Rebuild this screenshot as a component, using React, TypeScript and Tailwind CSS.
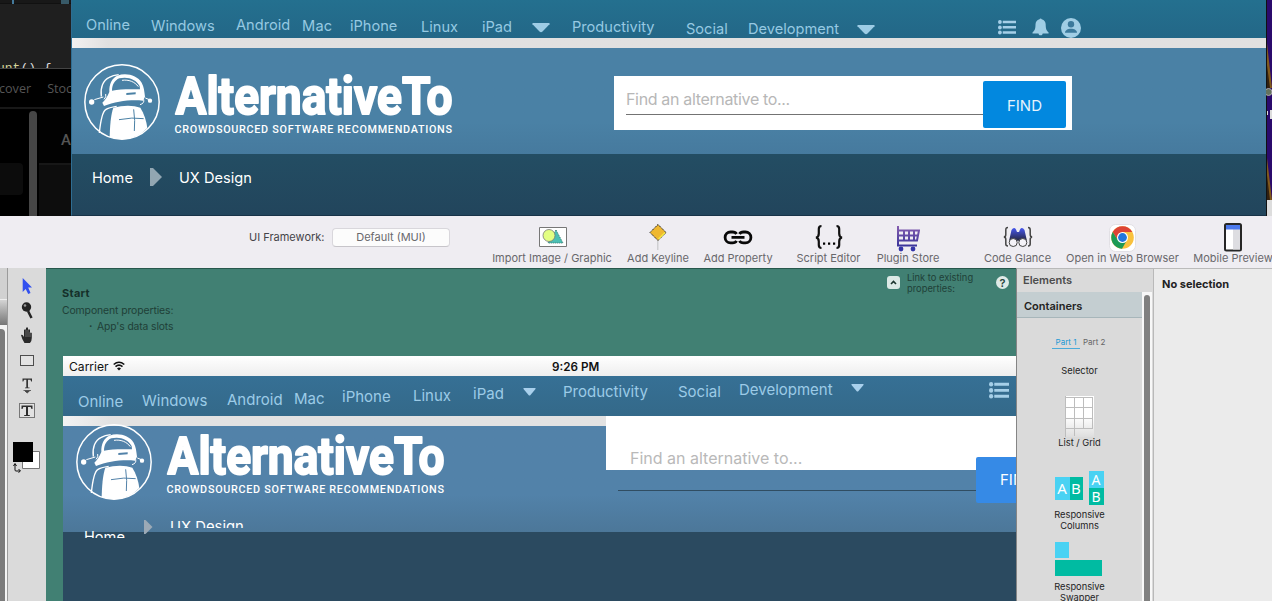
import React from "react";

type NavItem = { label?: string; icon?: "caret" | "list" | "bell" | "user"; cls: string };

const topNav: NavItem[] = [
  { label: "Online", cls: "w-[65px] pt-[15px]" },
  { label: "Windows", cls: "w-[85px] pt-[16px]" },
  { label: "Android", cls: "w-[66px] pt-[15px]" },
  { label: "Mac", cls: "w-[48px] pt-[16px] tracking-[0.2px]" },
  { label: "iPhone", cls: "w-[71px] pt-[16px]" },
  { label: "Linux", cls: "w-[61px] pt-[17px]" },
  { label: "iPad", cls: "w-[50px] pt-[17px]" },
  { icon: "caret", cls: "w-[40px] pt-[23px]" },
  { label: "Productivity", cls: "w-[114px] pt-[17px]" },
  { label: "Social", cls: "w-[62px] pt-[19px]" },
  { label: "Development", cls: "w-[109px] pt-[19px]" },
  { icon: "caret", cls: "w-[141px] pt-[25px]" },
  { icon: "list", cls: "w-[34px] pt-[20px]" },
  { icon: "bell", cls: "w-[29px] pt-[18px]" },
  { icon: "user", cls: "w-[20px] pt-[18px]" },
];

const mockNav: NavItem[] = [
  { label: "Online", cls: "w-[64px] pt-[16px]" },
  { label: "Windows", cls: "w-[85px] pt-[15px]" },
  { label: "Android", cls: "w-[67px] pt-[14px]" },
  { label: "Mac", cls: "w-[48px] pt-[13px]" },
  { label: "iPhone", cls: "w-[71px] pt-[11px]" },
  { label: "Linux", cls: "w-[60px] pt-[10px]" },
  { label: "iPad", cls: "w-[50px] pt-[8px]" },
  { icon: "caret", cls: "w-[40px] pt-[12px]" },
  { label: "Productivity", cls: "w-[115px] pt-[6px]" },
  { label: "Social", cls: "w-[61px] pt-[6px]" },
  { label: "Development", cls: "w-[112px] pt-[4px]" },
  { icon: "caret", cls: "w-[138px] pt-[8px]" },
  { icon: "list", cls: "w-[24px] pt-[6px]" },
];

function NavIcon({ name, small }: { name: string; small?: boolean }) {
  if (name === "caret")
    return small ? (
      <svg width="13" height="8" viewBox="0 0 13 8" className="block fill-[#a9d0ec]"><path d="M.5 0h12v1L7.5 7Q6.500 8 5.500 7L.5 1z" /></svg>
    ) : (
      <svg width="18" height="10" viewBox="0 0 18 10" className="block fill-[#9dcce5]"><path d="M.5 0h17v1.200L10.500 8.500Q9 9.800 7.500 8.500L.5 1.200z" /></svg>
    );
  if (name === "list")
    return (
      <svg width={small ? 20 : 18} height={small ? 17 : 15} viewBox="0 0 19 15" preserveAspectRatio="none" className="block fill-[#a5cfe8]">
        <circle cx="2" cy="2" r="2" /><circle cx="2" cy="7.400" r="2" /><circle cx="2" cy="12.600" r="2" />
        <path d="M5 .7h14v2.500H5zM5 6.100h14v2.500H5zM5 11.300h14v2.500H5z" />
      </svg>
    );
  if (name === "bell")
    return (
      <svg width="17" height="18" viewBox="0 0 17 18" className="block fill-[#a0cee5]">
        <path d="M7.500 1.300a1.200 1.200 0 0 1 2.200 0c2.700.6 4 2.700 4 5.200 0 4.500.8 6 2.900 8v.9H.5v-.9c2.200-2 3-3.500 3-8 0-2.500 1.300-4.600 4-5.200zM6.500 15.400h4.200c-.2 1.200-.9 1.900-2.100 1.900s-1.900-.7-2.100-1.900z" />
      </svg>
    );
  return (
    <svg width="20" height="20" viewBox="0 0 20 20" className="block">
      <circle cx="10" cy="10" r="10" fill="#a0cee5" />
      <circle cx="10" cy="6.200" r="3.200" fill="#3b7a9c" />
      <path d="M4 14.800c0-2.500 2.800-4 6-4s6 1.500 6 4z" fill="#3b7a9c" />
    </svg>
  );
}

function Nav({ items, small }: { items: NavItem[]; small?: boolean }) {
  return (
    <>
      {items.map((it, i) => (
        <div key={i} className={"shrink-0 whitespace-nowrap leading-5 " + it.cls}>
          {it.icon ? <NavIcon name={it.icon} small={small} /> : it.label}
        </div>
      ))}
    </>
  );
}

function Logo({ sky }: { sky: string }) {
  return (
    <svg width="370" height="76" viewBox="0 0 370 76" className="block overflow-visible">
      <g transform="scale(.33333)">
        <circle cx="114" cy="114" r="111.500" fill="none" stroke="#fff" strokeWidth="4.500" />
        <path d="M52 98C48 72 57 48 76 40C84 35 92 33 104 32" fill="none" stroke="#fff" strokeWidth="4" />
        <path d="M76 84C75 60 84 42 100 35C128 25 160 35 173 56C180 68 181 82 183 98L177 110C140 106 95 112 60 126L55 116C64 108 70 98 76 84z" fill="#fff" />
        <path d="M84 80C84 62 92 49 106 43C132 37 156 46 167 66L168 76C138 75 108 75 84 80z" fill={sky} />
        <path d="M114 49C134 46 152 53 163 68" fill="none" stroke="#fff" strokeWidth="3" />
        <path d="M127 87l28-2v6l-28 2z" fill={sky} />
        <path d="M60 106q8-7 5-16M31 107l27-8M184 102l12 5M168 122q14-4 11-16" fill="none" stroke="#fff" strokeWidth="3" />
        <path d="M46 207C49 178 53 145 65 137C72 132 84 129 98 127" fill="none" stroke="#fff" strokeWidth="4" />
        <path d="M77 220C78 185 80 155 88 131C118 123 148 123 169 131C180 148 187 170 190 192Q145 240 77 220z" fill="#fff" />
        <path d="M149 136Q154 170 151 201M105 167Q145 159 179 164" fill="none" stroke={sky} strokeWidth="3" />
        <circle cx="23" cy="114" r="8" fill="#fff" /><circle cx="198" cy="110" r="6.500" fill="#fff" />
      </g>
      <text x="91.500" y="50.300" textLength="277" lengthAdjust="spacingAndGlyphs" fill="#fff" stroke="#fff" strokeWidth="2" strokeLinejoin="round" className="font-['Roboto',sans-serif] text-[52.5px] font-bold">AlternativeTo</text>
      <text x="90.500" y="68.700" textLength="277.500" lengthAdjust="spacing" fill="#fff" className="font-['Roboto',sans-serif] text-[10.8px] font-medium">CROWDSOURCED SOFTWARE RECOMMENDATIONS</text>
    </svg>
  );
}

function TopBackground() {
  return (
    <div className="h-[216px] w-[71px] shrink-0 overflow-hidden bg-black text-[#555]">
      <div className="flex h-[69px] flex-col justify-between overflow-hidden border-b border-[#444] bg-[#1f1f1f]">
        <div className="flex h-1 justify-between border-b border-[#111] bg-[#181818] pl-3 pr-0.5"><i className="h-1 w-0.5 bg-[#44799b]" /><i className="h-1 w-2 bg-[#385a68]" /></div>
        <div className="-ml-[3px] h-[6px] overflow-hidden whitespace-pre font-['Liberation_Mono',monospace] text-[13px] leading-[14px] text-[#ddd]"><span className="text-[#d4d49a]">unt</span>() {"{"}</div>
      </div>
      <div className="flex h-10 gap-[16px] border-b-2 border-[#181818] pt-[10px] font-['Open_Sans',sans-serif] text-[12.6px] leading-5"><span className="-ml-px">cover</span><span>Stock</span></div>
      <div className="flex h-[107px]">
        <div className="w-[29px] pt-[54px]"><div className="h-8 w-[23px] rounded-r bg-[#0c0c0c]" /></div>
        <div className="mt-0.5 w-2 rounded-t-full bg-[#464646]" />
        <div className="ml-0.5 w-8 bg-[#0d0d0d]">
          <div className="h-[56px] border-b-2 border-[#171717] bg-[#020202] pl-[22px] pt-[21px] font-['Roboto',sans-serif] text-[15px] font-medium leading-5 text-[#555]">A</div>
        </div>
      </div>
    </div>
  );
}

function Site() {
  return (
    <div className="flex h-[216px] w-[1195px] shrink-0 flex-col border-b border-[#183348] border-l border-l-[#2f6d92]">
      <div className="flex h-[38px] shrink-0 bg-linear-to-b from-[#24708f] to-[#236787] pl-[14px] text-[14.6px] text-[#96c9e2]"><Nav items={topNav} /></div>
      <div className="h-[10px] shrink-0 bg-linear-to-r from-[#f1f1f1] via-[#e0e0e0] via-[3%] to-[#e0e0e0]" />
      <div className="flex h-[106px] shrink-0 bg-linear-to-b from-[#4a81a5] from-70% to-[#467a9e] pl-[12px] pt-[16px]">
        <div className="w-[530px]"><Logo sky="#4a81a5" /></div>
        <div className="mt-3 flex h-[54px] w-[458px] bg-white pl-3 pt-[5px]">
          <div className="h-[34px] w-[357px] border-b border-[#737373] pt-2 text-[16px] leading-5 tracking-[-0.34px] text-[#b7b7b7]">Find an alternative to...</div>
          <div className="flex h-[47px] w-[83px] items-center justify-center rounded-[2px] bg-[#0288df] pt-[3px] text-[15px] text-[#e6f3fc]">FIND</div>
        </div>
      </div>
      <div className="flex grow bg-linear-to-b from-[#234d63] to-[#22455c] pl-5 pt-[14px] text-[14.6px] leading-5 text-white">
        <span className="w-[58px]">Home</span>
        <svg width="12" height="20" viewBox="0 0 12 20" className="-mt-px mr-[17px]"><path d="M0 1h3l9 9-9 9H0z" fill="#92a6b2" /></svg>
        <span>UX Design</span>
      </div>
    </div>
  );
}

function RightEdge() {
  return (
    <div className="flex grow flex-col bg-[#2b0a6c]">
      <svg width="6" height="216" viewBox="0 0 6 216" className="block">
        <path d="M0 0h1v216H0z" fill="#111" />
        <path d="M1 43l5 45H1zM1 158l5 42H1z" fill="#80591c" />
        <path d="M1 65l3 23H1zM1 175l3 25H1z" fill="#322010" />
        <circle cx="2.500" cy="92" r="3.500" fill="#64735f" stroke="#aaa" />
        <path d="M1 111h1v4H1zM4 110h2v9H4z" fill="#ddd" />
        <path d="M1 200h5v16H1z" fill="#ddd" />
      </svg>
    </div>
  );
}

const tools: { label: string; cls: string; icon: React.ReactNode }[] = [
  { label: "Import Image / Graphic", cls: "w-[120px]", icon: (
    <svg width="28" height="30" viewBox="0 0 28 30" className="ml-0.5"><path d="M.5 5.500h27v19H.5z" fill="#fff" stroke="#777" /><path d="M17 8l7 13H9z" fill="#4cbfb3" stroke="#3b7770" strokeDasharray="1 1" /><circle cx="10" cy="13.500" r="6" fill="#e3ff83" stroke="#777" strokeWidth=".8" /></svg>) },
  { label: "Add Keyline", cls: "w-[62px] ml-[15px]", icon: (
    <svg width="18" height="30" viewBox="0 0 18 30"><path d="M8 19h1.500v9H8z" fill="#cfcfd2" /><path d="M9 2.500l8 8-8 8-8-8z" fill="#efb830" stroke="#222" strokeDasharray="1.500 .7" /><path d="M9.500 17l6.500-6.500" stroke="#f6e83f" strokeWidth="1.500" /></svg>) },
  { label: "Add Property", cls: "w-[70px] ml-[14px]", icon: (
    <svg width="30" height="30" viewBox="0 0 30 30" fill="none" stroke="#080808" strokeWidth="2.800"><path d="M13.500 12q-1-2-4-2H7.500a5.200 5.200 0 0 0 0 10.800H9.500q3 0 4-2M16.500 12q1-2 4-2h2a5.200 5.200 0 0 1 0 10.800h-2q-3 0-4-2M8.500 15.400h13" /></svg>) },
  { label: "Script Editor", cls: "w-[65px] ml-[23px]", icon: (
    <svg width="28" height="30" viewBox="0 0 28 30"><path d="M6.500 4Q3.800 4 3.800 7v4.500Q3.800 15 1 15.500Q3.800 16 3.800 19.500v3.500Q3.800 26 6.500 26M21.500 4Q24.200 4 24.200 7v4.500Q24.200 15 27 15.500Q24.200 16 24.200 19.500v3.500Q24.200 26 21.500 26" fill="none" stroke="#111" strokeWidth="2.200" /><path d="M8 20.500h2.200v2.200H8zM13 20.500h2.200v2.200H13zM18 20.500h2.200v2.200H18z" /></svg>) },
  { label: "Plugin Store", cls: "w-[64px] ml-[15px]", icon: (
    <svg width="24" height="30" viewBox="0 0 24 30"><defs><linearGradient id="cart" gradientUnits="userSpaceOnUse" x1="0" y1="3" x2="0" y2="25"><stop stopColor="#8a60b0" /><stop offset="1" stopColor="#37339a" /></linearGradient></defs><g fill="none" stroke="url(#cart)" strokeWidth="2"><path d="M2 4v19.500h19M2 8.500h21L21 18.500H2M2 13.500h20M8 8.500v10M13 8.500v10M18 8.500v10" /></g><circle cx="5" cy="27" r="2.400" fill="#3434a8" /><circle cx="17" cy="27" r="2.400" fill="#3434a8" /></svg>) },
  { label: "Code Glance", cls: "w-[67px] ml-[44px]", icon: (
    <svg width="30" height="30" viewBox="0 0 30 30"><defs><linearGradient id="bino" x1="0" y1="0" x2="0" y2="1"><stop stopColor="#4656ee" /><stop offset="1" stopColor="#25253a" /></linearGradient></defs><path d="M6 19L8.500 8Q11 4.500 13 7.500L14 10h2l1-2.500Q19 4.500 21.500 8L24 19l-5-2-4 2-4-2z" fill="url(#bino)" /><circle cx="10.200" cy="20.500" r="4" fill="#f5f3f8" stroke="#444" /><circle cx="19.800" cy="20.500" r="4" fill="#f5f3f8" stroke="#444" /><path d="M5 5.500Q2.800 5.500 2.800 8v4.500q0 2.500-2 2.500 2 0 2 2.500V22q0 2 2.200 2M25 5.500q2.200 0 2.200 2.500v4.500q0 2.500 2 2.500-2 0-2 2.500V22q0 2-2.200 2" fill="none" stroke="#444" strokeWidth="1.500" /></svg>) },
  { label: "Open in Web Browser", cls: "w-[113px] ml-[15px]", icon: (
    <svg width="27" height="32" viewBox="0 0 27 32"><rect x=".5" y="2.500" width="26" height="27" rx="6" fill="#fff" stroke="#e2e0e5" /><circle cx="13.500" cy="15.500" r="11.300" fill="#f9c13d" /><path d="M3.700 10a11.300 11.300 0 0 1 19.600 0H13.500v5.500L8.800 18z" fill="#dd4335" /><path d="M3.700 10a11.300 11.300 0 0 0 9.300 16.800l5-8.800-9.200 0z" fill="#1c9a55" /><circle cx="13.500" cy="15.500" r="5.500" fill="#fff" /><circle cx="13.500" cy="15.500" r="4.400" fill="#2276dd" /></svg>) },
  { label: "Mobile Preview", cls: "w-[80px] ml-[14px]", icon: (
    <svg width="18" height="34" viewBox="0 0 18 34"><rect x="1" y="2" width="16" height="26.500" rx="1.500" fill="#fff" stroke="#262626" strokeWidth="2" /><path d="M9 7h7v20.500H9z" fill="#dddde1" /><path d="M2 3h14v4.500H2z" fill="#4c79ed" /></svg>) },
];

function Toolbar() {
  return (
    <div className="flex h-[52px] shrink-0 overflow-hidden bg-[#efedf2] text-[11px] text-[#69686c]">
      <div className="flex h-[42px] w-[492px] shrink-0 items-center pl-[249px] leading-[14px]">
        <span className="w-[83px] shrink-0 whitespace-nowrap text-[#454449]">UI Framework:</span>
        <span className="flex h-[19px] w-[118px] items-center justify-center rounded border border-[#d9d7dc] border-b-[#c7c5ca] bg-[#fcfcfc]">Default (MUI)</span>
      </div>
      {tools.map((t) => (
        <div key={t.label} className={"flex shrink-0 flex-col items-center whitespace-nowrap pt-[6px] leading-[14px] " + t.cls}>
          <div className="flex h-[29px] items-start justify-center">{t.icon}</div>
          <span>{t.label}</span>
        </div>
      ))}
    </div>
  );
}

function Palette() {
  return (
    <>
      <div className="flex w-[8px] shrink-0 flex-col border-r border-[#9b9b9b] bg-[#d1d1d1]">
        <div className="h-[31px]" />
        <div className="h-[26px] border-t border-[#eee] bg-linear-to-b from-[#d4d4d4] to-[#777]" />
        <div className="grow bg-[#f4f4f4] pt-1"><div className="h-full w-[5px] rounded-tr bg-[#7b7b7b]" /></div>
      </div>
      <div className="w-[38px] shrink-0 bg-[#dadada]">
        <svg width="38" height="333" viewBox="8 268 38 333" className="block">
          <path d="M22.700 278v14l3-3 2.500 5 2.300-1-2.300-5.500h3.800z" fill="#3150ef" />
          <circle cx="26.500" cy="307" r="4.700" fill="#242424" /><path d="M28 311l3.500 7" stroke="#242424" strokeWidth="2.500" /><circle cx="25" cy="305.500" r="1.300" fill="#999" />
          <path d="M24.500 343q-3-5-3.500-8 1.500-1 3 2v-7q1.300-1.500 2 0v-2q1.200-1.500 2 0v2q1.200-1.500 2 0v3q1-1 1.800 0v5q0 3-1.800 5z" fill="#2a2a2a" />
          <path d="M26 337v-7M28 337v-7M30 337v-5" stroke="#aaa" strokeWidth=".5" />
          <rect x="20.500" y="355.500" width="13" height="10" fill="#e3e3e3" stroke="#4d4d4d" />
          <path d="M22.500 378.500h9.500v3h-.8l-.8-1.700H28v7.700h1.500v.8h-4.500v-.8h1.300v-7.700h-2.200l-.8 1.700h-.8z" fill="#333" />
          <path d="M23.500 390.500h7.500M25 391l2.200 2 2.200-2z" fill="#444" stroke="#444" strokeWidth=".8" />
          <rect x="19.500" y="403.500" width="15" height="14" fill="#e2e2e2" stroke="#777" />
          <path d="M21.500 405.500h11v3.500h-1l-.8-2H28v8h1.800v1h-5.600v-1H26v-8h-2.700l-.8 2h-1z" fill="#2d2d2d" />
          <path d="M22.500 451.500h17v17h-17z" fill="#fff" stroke="#777" /><path d="M13 442h20v20H13z" fill="#000" />
          <path d="M15 464v6q0 1 1 1h4M13.500 466l1.500-2.500 1.500 2.500M18.500 469l2 2-2 1.500" fill="none" stroke="#111" />
        </svg>
      </div>
    </>
  );
}

function Mockup() {
  return (
    <div className="ml-[17px] flex w-[953px] grow flex-col overflow-hidden">
      <div className="flex h-5 shrink-0 bg-linear-to-b from-white to-[#eee] pl-[6px] pt-px text-[13px] leading-5 text-[#111]">
        <span className="w-[44px] text-[12.1px]">Carrier</span>
        <svg width="12" height="10" viewBox="0 0 12 10" fill="none" stroke="#111" className="mt-1"><path d="M.7 3.500Q6-1 11.300 3.500M2.500 5.700q3.500-3 7 0" strokeWidth="1.600" /><path d="M4 7.500q2-1.800 4 0L6 9.500z" fill="#111" stroke="none" /></svg>
        <span className="ml-[427px] text-[11.700px] font-semibold">9:26 PM</span>
      </div>
      <div className="flex h-10 shrink-0 bg-linear-to-b from-[#367095] to-[#346989] pl-[15px] text-[15px] text-[#9ccbe7]"><Nav items={mockNav} small /></div>
      <div className="h-[10px] shrink-0 bg-linear-to-r from-[#f3f3f3] via-[#e2e2e2] via-[5%] to-[#e2e2e2]" />
      <div className="relative flex h-[106px] shrink-0 bg-linear-to-b from-[#5282a9] from-65% to-[#4c7799] pl-[13px]">
        <div className="-mt-[2px] h-[76px]"><Logo sky="#5282a9" /></div>
        <div className="absolute -top-[10px] left-[543px] h-[54px] w-[410px] bg-white pl-6 pt-8 text-[16px] leading-5 text-[#b9b9b9]">Find an alternative to...</div>
        <div className="absolute left-[555px] top-[64px] h-px w-[358px] bg-[#304d62]" />
        <div className="absolute left-[913px] top-[31px] h-[46px] w-[83px] rounded-[2px] bg-[#368ae6] pl-6 pt-[13px] text-[15px] leading-5 text-white">FIND</div>
        <div className="absolute left-[21px] top-[101px] h-[11px] overflow-hidden text-[14.6px] leading-5 text-white">Home</div>
        <svg width="9" height="14" viewBox="0 0 9 14" className="absolute left-[81px] top-[94px]"><path d="M0 0h1.500L8.500 7 1.500 14H0z" fill="#9ba9b6" /></svg>
        <div className="absolute left-[107px] top-[91px] h-[11px] overflow-hidden text-[14.8px] leading-5 text-white">UX Design</div>
      </div>
      <div className="grow bg-[#2b4a60]" />
    </div>
  );
}

function Canvas() {
  return (
    <div className="flex w-[970px] shrink-0 flex-col border-t border-[#27574c] bg-[#418073] text-[11px] text-[#1f3f37]">
      <div className="flex h-[87px] shrink-0 leading-4">
        <div className="w-[841px] shrink-0 pl-4 pt-4">
          <div className="font-bold leading-[17px] tracking-[0.3px] text-[#15302a]">Start</div>
          <div className="text-[10.4px] leading-[17px] tracking-[-0.1px]">Component properties:</div>
          <div className="flex pl-[27px] text-[10.300px] leading-[15px] tracking-[-0.1px]"><span className="w-[8px] font-bold">·</span>App's data slots</div>
        </div>
        <div className="mt-[7px] flex h-[13px] w-[13px] items-center justify-center rounded-[3px] bg-[#dce9e6]">
          <svg width="7" height="5" viewBox="0 0 7 5"><path d="M1 4l2.500-2.500L6 4" fill="none" stroke="#1b332d" strokeWidth="1.600" /></svg>
        </div>
        <div className="ml-[7px] w-[89px] pt-[3px] text-[9.350px] leading-[11px]">Link to existing<br />properties:</div>
        <div className="mt-[7px] flex h-[13px] w-[13px] items-center justify-center rounded-full bg-[#dfeae7] font-semibold text-[#28453e]">?</div>
      </div>
      <Mockup />
    </div>
  );
}

function Elements() {
  return (
    <div className="flex w-[138px] shrink-0 flex-col border-l border-r border-t border-[#b9b9b9] border-l-[#858585] bg-[#dadada]">
      <div className="h-6 shrink-0 pl-[6px] pt-[3px] text-[11px] font-semibold leading-4 text-[#4c4c4c]">Elements</div>
      <div className="-mt-px flex grow">
        <div className="flex w-[125px] flex-col items-center text-[9.300px] leading-[11px] text-[#242424]">
          <div className="h-[26px] w-full shrink-0 border-b border-[#a7b6ba] bg-[#c4ced1] pl-[7px] pt-[6px] text-[11px] font-semibold leading-4 text-[#222]">Containers</div>
          <div className="flex flex-col items-center">
            <div className="mt-[18px] -ml-px flex w-[54px] gap-[3px] whitespace-nowrap text-[8px] leading-3">
              <span className="h-[13px] w-[28px] border-b border-[#4babd9] text-center text-[#1c99d5]">Part 1</span><span className="text-[#666]">Part 2</span>
            </div>
            <div className="mt-[16px]">Selector</div>
            <svg width="29" height="41" viewBox="0 0 29 41" className="mt-[20px]">
              <defs><linearGradient id="grid" x1="0" y1="0" x2="0" y2="1"><stop offset=".5" stopColor="#fff" /><stop offset="1" stopColor="#dedede" /></linearGradient></defs>
              <path d="M0 0h29v41H0z" fill="url(#grid)" /><path d="M.5 0v41M9.500 1v39M18.500 1v31M27.500 1v31M0 1.500h28M0 11.500h28M0 22.500h28M0 32.500h28" stroke="#bdbdbd" fill="none" />
            </svg>
            <div>List / Grid</div>
            <div className="mt-[23px] -ml-px flex h-[34px] w-[49px] items-center justify-between text-[15px] text-white">
              <div className="flex h-[23px] w-[28px] items-center text-center font-['Noto_Sans',sans-serif]"><span className="w-[15px] bg-[#49d2f3] leading-[23px]">A</span><span className="w-[13px] bg-[#00bba2] leading-[23px]">B</span></div>
              <div className="w-[15px] text-center font-['Noto_Sans',sans-serif] text-[14px] leading-[17px]"><div className="bg-[#49d2f3]">A</div><div className="bg-[#00bba2]">B</div></div>
            </div>
            <div className="mt-[4px] text-center">Responsive<br />Columns</div>
            <div className="mt-[11px] -ml-px w-[48px]"><div className="h-[16px] w-[14px] bg-[#49d2f3]" /><div className="mt-0.5 h-[16px] w-[47px] bg-[#00bba2]" /></div>
            <div className="mt-[5px] text-center">Responsive<br />Swapper</div>
          </div>
        </div>
        <div className="w-[10px] bg-[#f8f8f8] pl-[2px] pt-[3px]"><div className="h-full w-[6px] rounded-t-full bg-[#808080]" /></div>
      </div>
    </div>
  );
}

export default function App() {
  return (
    <div className="flex h-[601px] w-[1272px] flex-col overflow-hidden bg-[#efedf2] font-['Inter',sans-serif]">
      <div className="flex h-[216px] shrink-0"><TopBackground /><Site /><RightEdge /></div>
      <Toolbar />
      <div className="flex h-[333px] shrink-0 overflow-hidden">
        <Palette />
        <Canvas />
        <Elements />
        <div className="grow border-t border-[#bbb] bg-[#ebebeb] pl-2 pt-[7px] text-[11px] font-bold leading-4 text-[#222]">No selection</div>
      </div>
    </div>
  );
}
